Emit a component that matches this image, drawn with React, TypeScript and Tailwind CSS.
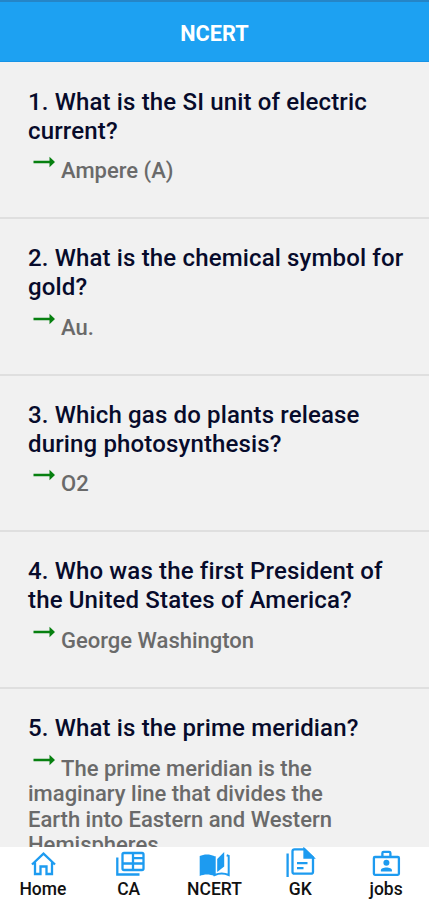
import type { ReactNode } from "react";

type Question = { id: number; lines: string[]; answer: string[] };

const questions: Question[] = [
  { id: 1, lines: ["1. What is the SI unit of electric", "current?"], answer: ["Ampere (A)"] },
  { id: 2, lines: ["2. What is the chemical symbol for", "gold?"], answer: ["Au."] },
  { id: 3, lines: ["3. Which gas do plants release", "during photosynthesis?"], answer: ["O2"] },
  { id: 4, lines: ["4. Who was the first President of", "the United States of America?"], answer: ["George Washington"] },
  {
    id: 5,
    lines: ["5. What is the prime meridian?"],
    answer: ["The prime meridian is the", "imaginary line that divides the", "Earth into Eastern and Western", "Hemispheres."],
  },
];

function Arrow() {
  return (
    <svg className="mt-[-2px] mr-[6px] ml-[5px] h-[12px] w-[22px] shrink-0" viewBox="0 0 22 12">
      <path d="M.5 4.700H16.500V.800L22 6l-5.500 5.200V7.300H.5z" fill="#078010" />
    </svg>
  );
}

function HomeIcon() {
  return (
    <svg className="h-[31px] w-[32px]" viewBox="-.5 -1 32 31" fill="none" stroke="#1d9bf0" strokeWidth="2.300">
      <path d="M4.500 16.500 16 5.700 27.500 16.500M7.500 14.500V26H13V18.500H19V26H24.500V14.500" />
    </svg>
  );
}

function NewsIcon() {
  return (
    <svg className="ml-[4px] h-[31px] w-[32px]" viewBox="0 -1 32 31" fill="none" stroke="#1d9bf0" strokeWidth="2.300">
      <rect x="7.500" y="5" width="21" height="17" rx="1.500" />
      <path d="M2.300 9.500V26.500H24.500M7.500 15.500H28.500M18 5V15.500M18 10.200H28.500M18 15.500V22" />
    </svg>
  );
}

function BookIcon() {
  return (
    <svg className="h-[31px] w-[32px]" viewBox="-.7 -1 32 31">
      <path d="M1 8C5 5.900 11.500 5.900 15.500 8V28C11 26 5.500 26 1 28V8z" fill="#1d9bf0" />
      <path d="M18.500 11 25.500 4V18.500L18.500 24z" fill="#1d9bf0" />
      <path d="M16 8.300V27C20.500 25 25.500 25 30 27V8L28 7.200" fill="none" stroke="#1d9bf0" strokeWidth="2" />
    </svg>
  );
}

function DocIcon() {
  return (
    <svg className="h-[31px] w-[32px]" viewBox="0 -1 32 31" fill="none" stroke="#1d9bf0" strokeWidth="2.300">
      <path d="M10.500 1.300H20.500L29 9.500V23.700Q29 25.700 27 25.700H10.500Q8.500 25.700 8.500 23.700V3.300Q8.500 1.300 10.500 1.300z" />
      <path d="M20.500 1.300V9.500H29z" fill="#1d9bf0" />
      <path d="M3.600 5.500V29M13 15.200H23.500M13 20.200H19.500" />
    </svg>
  );
}

function BadgeIcon() {
  return (
    <svg className="h-[31px] w-[32px]" viewBox="-.4 -1 32 31" fill="none" stroke="#1d9bf0" strokeWidth="2.300">
      <rect x="3.500" y="9" width="25" height="17.800" rx="1" />
      <path d="M12 9V5Q12 3.800 13.200 3.800H18.800Q20 3.800 20 5V9" />
      <circle cx="16" cy="14.800" r="3" fill="#1d9bf0" stroke="none" />
      <path d="M10.500 23.500V22.300C10.500 18.700 21.500 18.700 21.500 22.300V23.500z" fill="#1d9bf0" stroke="none" />
    </svg>
  );
}

const tabs: { label: string; icon: ReactNode }[] = [
  { label: "Home", icon: <HomeIcon /> },
  { label: "CA", icon: <NewsIcon /> },
  { label: "NCERT", icon: <BookIcon /> },
  { label: "GK", icon: <DocIcon /> },
  { label: "jobs", icon: <BadgeIcon /> },
];

export default function App() {
  return (
    <div className="flex h-[900px] w-full flex-col overflow-hidden bg-[#f1f1f1] font-['Roboto',sans-serif] font-medium">
      <header className="flex h-[62px] shrink-0 items-center justify-center border-t-2 border-b border-t-[#2585c7] border-b-[#1693e6] bg-[#1da1f2] pt-[5px] text-[21.700px] font-bold text-white">
        <h1>NCERT</h1>
      </header>
      <main className="min-h-0 flex-1 overflow-hidden pt-[0.700px]">
        {questions.map((q) => (
          <article key={q.id} className="h-[156.500px] border-b-2 border-[#dfdfdf] pt-[25.200px] pl-[28px] last:border-b-0">
            <h2 className="text-[24px] leading-[28.800px] font-medium tracking-[0.150px] whitespace-nowrap text-[#070b2b]">
              {q.lines.map((line) => (
                <span key={line} className="block">{line}</span>
              ))}
            </h2>
            <div className="pt-[13px] text-[22px] leading-[25.500px] whitespace-nowrap text-[#6a6a6a]">
              <div className="flex items-start">
                <Arrow />
                <span>{q.answer[0]}</span>
              </div>
              {q.answer.slice(1).map((line) => (
                <p key={line}>{line}</p>
              ))}
            </div>
          </article>
        ))}
      </main>
      <nav className="z-10 grid h-[53px] shrink-0 grid-cols-5 bg-white text-[17.500px] leading-[22px] text-[#111]">
        {tabs.map((tab) => (
          <div key={tab.label} className="flex flex-col items-center">
            {tab.icon}
            <span>{tab.label}</span>
          </div>
        ))}
      </nav>
    </div>
  );
}
